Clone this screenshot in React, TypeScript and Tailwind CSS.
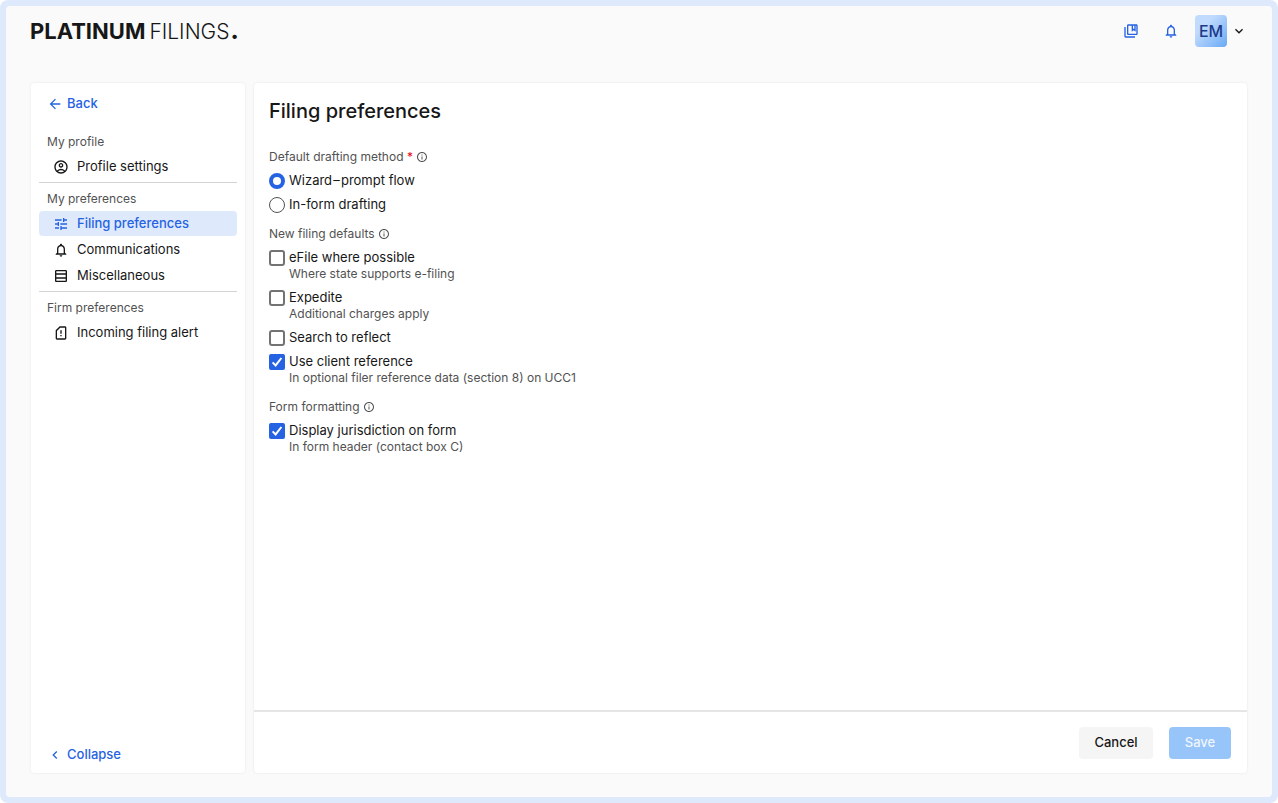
import { useState } from 'react'
import type { ReactNode } from 'react'
import {
  MdArrowBack,
  MdChevronLeft,
  MdInfoOutline,
  MdKeyboardArrowDown,
  MdNotificationsNone,
  MdOutlineAccountCircle,
  MdOutlineCollectionsBookmark,
  MdOutlineSimCardAlert,
  MdOutlineTableRows,
  MdTune,
} from 'react-icons/md'

const sections = [
  {
    title: 'My profile',
    items: [{ label: 'Profile settings', icon: <MdOutlineAccountCircle /> }],
  },
  {
    title: 'My preferences',
    items: [
      { label: 'Filing preferences', icon: <MdTune />, active: true },
      { label: 'Communications', icon: <MdNotificationsNone /> },
      { label: 'Miscellaneous', icon: <MdOutlineTableRows /> },
    ],
  },
  {
    title: 'Firm preferences',
    items: [{ label: 'Incoming filing alert', icon: <MdOutlineSimCardAlert /> }],
  },
]

const methods = [
  { id: 'wizard', label: 'Wizard\u200a–\u200aprompt flow' },
  { id: 'inform', label: 'In-form drafting' },
]

const filingDefaults = [
  { id: 'efile', label: 'eFile where possible', hint: 'Where state supports e-filing' },
  { id: 'expedite', label: 'Expedite', hint: 'Additional charges apply' },
  { id: 'search', label: 'Search to reflect' },
  {
    id: 'reference',
    label: 'Use client reference',
    hint: 'In optional filer reference data (section 8) on UCC1',
    checked: true,
  },
]

const formatting = [
  {
    id: 'jurisdiction',
    label: 'Display jurisdiction on form',
    hint: 'In form header (contact box C)',
    checked: true,
  },
]

export default function App() {
  return (
    <div className="min-h-screen flex rounded-lg bg-[#deeafc] p-1.5 font-['Inter','Liberation_Sans',sans-serif] text-[13px] text-neutral-900">
      <div className="flex-1 flex flex-col rounded bg-neutral-50 px-[25px] pt-[9px] pb-6">
        <Header />
        <div className="flex-1 flex gap-[9px] mt-9">
          <Sidebar />
          <Preferences />
        </div>
      </div>
    </div>
  )
}

function Header() {
  return (
    <header className="flex items-center justify-between h-8">
      <a href="#" className="-ml-px flex items-baseline leading-8 text-neutral-900">
        <span className="text-[22px] font-bold">PLATINUM</span>
        <span className="ml-1 text-[21px] font-light">FILINGS</span>
        <span className="ml-px text-[22px] font-black">.</span>
      </a>
      <div className="flex items-center">
        <button aria-label="Library" className="mr-6 text-[#2563e3] text-base">
          <MdOutlineCollectionsBookmark />
        </button>
        <button aria-label="Notifications" className="mr-4 text-[#2563e3] text-base">
          <MdNotificationsNone />
        </button>
        <button aria-label="Account menu" className="flex items-center gap-1">
          <span className="w-8 h-8 rounded flex items-center justify-center bg-linear-to-br from-[#c0dbfd] from-30% to-[#68a8f5] text-[#1e3a8a] text-base font-medium">
            EM
          </span>
          <MdKeyboardArrowDown className="text-base" />
        </button>
      </div>
    </header>
  )
}

function Sidebar() {
  return (
    <aside className="w-[214px] shrink-0 flex flex-col rounded bg-white px-2 pt-[9px] pb-1.5 shadow-[0_0_3px_rgba(0,0,0,0.08)]">
      <a href="#" className="flex items-center gap-1 h-6 px-2 font-medium text-[#2563e3]">
        <MdArrowBack className="text-base" />
        Back
      </a>
      <nav className="mt-[18px]">
        {sections.map((section) => (
          <div
            key={section.title}
            className="pb-[3px] mb-2 last:mb-0 border-b border-neutral-300 last:border-b-0"
          >
            <h2 className="px-2 mb-1 h-4 text-xs leading-4 text-neutral-600">{section.title}</h2>
            <ul className="flex flex-col gap-px">
              {section.items.map((item) => (
                <NavItem key={item.label} item={item} />
              ))}
            </ul>
          </div>
        ))}
      </nav>
      <button className="mt-auto flex items-center gap-1 h-6 px-2 font-medium text-[#2563e3] self-start">
        <MdChevronLeft className="text-base" />
        Collapse
      </button>
    </aside>
  )
}

function NavItem({ item }: { item: { label: string; icon: ReactNode; active?: boolean } }) {
  return (
    <li>
      <a
        href="#"
        className={`flex items-center gap-2 h-[25px] rounded px-3.5 ${
          item.active ? 'bg-[#deeafc] text-[#2563e3] font-medium' : ''
        }`}
      >
        <span className="text-base leading-none">{item.icon}</span>
        {item.label}
      </a>
    </li>
  )
}

function Preferences() {
  const [method, setMethod] = useState('wizard')

  return (
    <main className="flex-1 flex flex-col rounded bg-white shadow-[0_0_3px_rgba(0,0,0,0.08)]">
      <div className="flex-1 px-[15px] py-3.5">
        <h1 className="mb-6 text-xl leading-7 font-medium">Filing preferences</h1>
        <div className="flex flex-col gap-[13px]">
          <Group title="Default drafting method" required>
            {methods.map((m) => (
              <label key={m.id} className="flex items-center gap-1 h-4">
                <input
                  type="radio"
                  name="method"
                  checked={method === m.id}
                  onChange={() => setMethod(m.id)}
                  className="appearance-none w-4 h-4 rounded-full border border-neutral-600 checked:border-4 checked:border-[#2563e3]"
                />
                {m.label}
              </label>
            ))}
          </Group>
          <Group title="New filing defaults">
            {filingDefaults.map((option) => (
              <CheckOption key={option.id} option={option} />
            ))}
          </Group>
          <Group title="Form formatting">
            {formatting.map((option) => (
              <CheckOption key={option.id} option={option} />
            ))}
          </Group>
        </div>
      </div>
      <footer className="flex justify-end gap-4 border-t-2 border-neutral-200 px-4 pt-[15px] pb-3.5">
        <button className="h-8 w-[74px] rounded bg-neutral-100 font-medium">Cancel</button>
        <button className="h-8 w-[62px] rounded bg-[#98c5f9] text-blue-50 font-medium">Save</button>
      </footer>
    </main>
  )
}

function Group({ title, required, children }: { title: string; required?: boolean; children: ReactNode }) {
  return (
    <fieldset>
      <legend className="flex items-center gap-[3px] h-4 mb-2 text-xs text-neutral-600">
        <span>
          {title}
          {required && <span className="text-red-600"> *</span>}
        </span>
        <MdInfoOutline />
      </legend>
      <div className="flex flex-col gap-2">{children}</div>
    </fieldset>
  )
}

function CheckOption({ option }: { option: { id: string; label: string; hint?: string; checked?: boolean } }) {
  return (
    <div>
      <label htmlFor={option.id} className="flex items-center gap-1 h-4 w-fit">
        <span className="relative w-4 h-4">
          <input
            id={option.id}
            type="checkbox"
            defaultChecked={option.checked}
            aria-describedby={option.hint ? `${option.id}-hint` : undefined}
            className="peer block appearance-none w-4 h-4 rounded-[3px] border-2 border-neutral-500 checked:border-0 checked:rounded-xs checked:bg-[#2563e3]"
          />
          <svg
            viewBox="0 0 16 16"
            className="absolute inset-0 w-4 h-4 hidden peer-checked:block pointer-events-none"
            fill="none"
            stroke="white"
            strokeWidth="2"
          >
            <path d="M3.6 8.4l3 3 5.8-7.4" />
          </svg>
        </span>
        {option.label}
      </label>
      {option.hint && (
        <p id={`${option.id}-hint`} className="pl-5 text-xs leading-4 text-neutral-600">
          {option.hint}
        </p>
      )}
    </div>
  )
}
